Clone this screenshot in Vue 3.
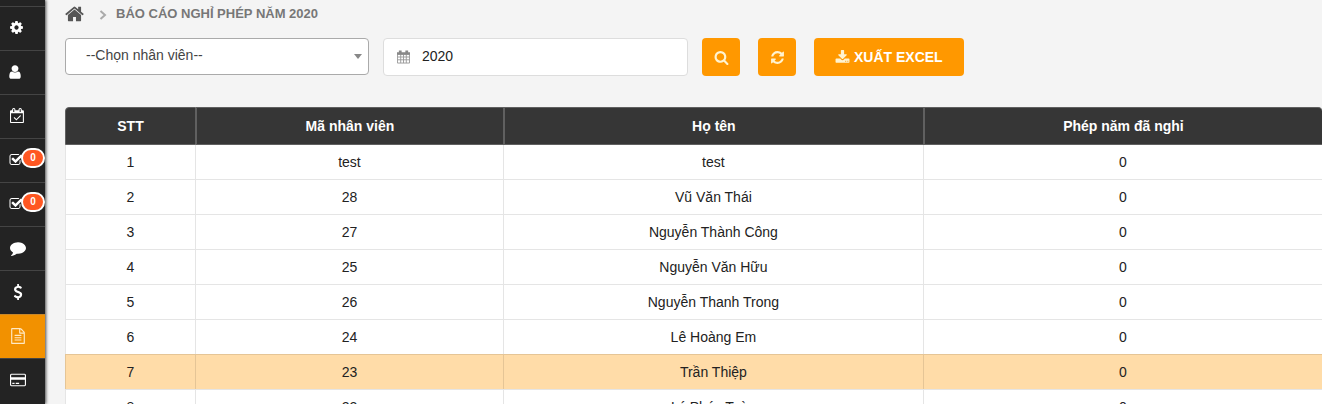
<script setup>
import { ref } from 'vue';

const employee = ref('');
const year = ref('2020');

const icons = {
    cog: 'M1152 896q0-106-75-181t-181-75-181 75-75 181 75 181 181 75 181-75 75-181zm512-109v222q0 12-8 23t-20 13l-185 28q-19 54-39 91 35 50 107 138 10 12 10 25t-9 23q-27 37-99 108t-94 71q-12 0-26-9l-138-108q-44 23-91 38-16 136-29 186-7 28-36 28h-222q-14 0-24.500-8.500t-11.500-21.500l-28-184q-49-16-90-37l-141 107q-10 9-25 9-14 0-25-11-126-114-165-168-7-10-7-23 0-12 8-23 15-21 51-66.500t54-70.500q-27-50-41-99l-183-27q-13-2-21-12.500t-8-23.500v-222q0-12 8-23t19-13l186-28q14-46 39-92-40-57-107-138-10-12-10-24 0-10 9-23 26-36 98.500-107.500t94.500-71.500q13 0 26 10l138 107q44-23 91-38 16-136 29-186 7-28 36-28h222q14 0 24.500 8.500t11.500 21.500l28 184q49 16 90 37l142-107q9-9 24-9 13 0 25 10 129 119 165 170 7 8 7 22 0 12-8 23-15 21-51 66.500t-54 70.500q26 50 41 98l183 28q13 2 21 12.500t8 23.500z',
    user: 'M1536 1399q0 109-62.500 187t-150.500 78h-854q-88 0-150.500-78t-62.500-187q0-85 8.500-160.500t31.500-152 58.500-131 94-89 134.500-34.500q131 128 313 128t313-128q76 0 134.500 34.500t94 89 58.500 131 31.500 152 8.500 160.500zm-256-887q0 159-112.500 271.500t-271.500 112.500-271.500-112.500-112.500-271.500 112.500-271.500 271.500-112.500 271.500 112.500 112.500 271.500z',
    calendar: 'M1303 964l-512 512q-10 9-23 9t-23-9l-288-288q-9-10-9-23t9-22l46-46q9-9 22-9t23 9l220 220 444-444q10-9 23-9t22 9l46 46q9 9 9 22t-9 23zm-1175 700h1408v-1024h-1408v1024zm384-1216v-288q0-14-9-23t-23-9h-64q-14 0-23 9t-9 23v288q0 14 9 23t23 9h64q14 0 23-9t9-23zm768 0v-288q0-14-9-23t-23-9h-64q-14 0-23 9t-9 23v288q0 14 9 23t23 9h64q14 0 23-9t9-23zm384-64v1280q0 52-38 90t-90 38h-1408q-52 0-90-38t-38-90v-1280q0-52 38-90t90-38h128v-96q0-66 47-113t113-47h64q66 0 113 47t47 113v96h384v-96q0-66 47-113t113-47h64q66 0 113 47t47 113v96h128q52 0 90 38t38 90z',
    check: 'M1472 930v318q0 119-84.500 203.500t-203.500 84.500h-832q-119 0-203.500-84.500t-84.500-203.500v-832q0-119 84.500-203.500t203.500-84.500h832q63 0 117 25 15 7 18 23 3 17-9 29l-49 49q-10 10-23 10-3 0-9-2-23-6-45-6h-832q-66 0-113 47t-47 113v832q0 66 47 113t113 47h832q66 0 113-47t47-113v-254q0-13 9-22l64-64q10-10 23-10 6 0 12 3 20 8 20 29zm231-489l-814 814q-24 24-57 24t-57-24l-430-430q-24-24-24-57t24-57l110-110q24-24 57-24t57 24l263 263 647-647q24-24 57-24t57 24l110 110q24 24 24 57t-24 57z',
    comment: 'M1792 896q0 174-120 321.500t-326 233-450 85.500q-70 0-145-8-198 175-460 242-49 14-114 22-17 2-30.500-9t-17.500-29v-1q-3-4-.5-12t2-10 4.500-9.500l6-9 7-8.500 8-9q7-8 31-34.500t34.500-38 31-39.500 32.500-51 27-59 26-76q-157-89-247.500-220t-90.500-281q0-130 71-248.500t191-204.500 286-136.500 348-50.500q244 0 450 85.500t326 233 120 321.500z',
    dollar: 'M1362 1185q0 153-99.500 263.500t-258.500 136.500v175q0 14-9 23t-23 9h-135q-13 0-22.500-9.500t-9.500-22.500v-175q-66-9-127.500-31t-101.500-44.500-74-48-46.500-37.500-17.500-18q-17-21-2-41l103-135q7-10 23-12 15-2 24 9l2 2q113 99 243 125 37 8 74 8 81 0 142.500-43t61.500-122q0-28-15-53t-33.500-42-58.500-37.500-66-32-80-32.500q-39-16-61.500-25t-61.500-26.500-62.500-31-56.500-35.500-53.500-42.500-43.500-49-35.500-58-21-66.500-8.500-78q0-138 98-242t255-134v-180q0-13 9.500-22.500t22.500-9.500h135q14 0 23 9t9 23v176q57 6 110.500 23t87 33.500 63.500 37.500 39 29 15 14q17 18 5 38l-81 146q-8 15-23 16-14 3-27-7-3-3-14.500-12t-39-26.500-58.500-32-74.500-26-85.500-11.500q-95 0-155 43t-60 111q0 26 8.500 48t29.500 41.500 39.500 33 56 31 60.500 27 70 27.500q53 20 81 31.500t76 35 75.500 42.500 62 50 53 63.500 31.500 76.500 13 94z',
    file: 'M1596 380q28 28 48 76t20 88v1152q0 40-28 68t-68 28h-1344q-40 0-68-28t-28-68v-1600q0-40 28-68t68-28h896q40 0 88 20t76 48zm-444-244v376h376q-10-29-22-41l-313-313q-12-12-41-22zm384 1528v-1024h-416q-40 0-68-28t-28-68v-416h-768v1536h1280zm-1024-864q0-14 9-23t23-9h704q14 0 23 9t9 23v64q0 14-9 23t-23 9h-704q-14 0-23-9t-9-23v-64zm736 224q14 0 23 9t9 23v64q0 14-9 23t-23 9h-704q-14 0-23-9t-9-23v-64q0-14 9-23t23-9h704zm0 256q14 0 23 9t9 23v64q0 14-9 23t-23 9h-704q-14 0-23-9t-9-23v-64q0-14 9-23t23-9h704z',
    card: 'M160 192h1472q66 0 113 47t47 113v1088q0 66-47 113t-113 47h-1472q-66 0-113-47t-47-113v-1088q0-66 47-113t113-47zm0 128q-32 0-32 32v224h1536v-224q0-32-32-32zm-32 544v576q0 32 32 32h1472q32 0 32-32v-576zm128 352h256v128h-256zm384 0h384v128h-384z'
};

const menu = [
    { label: 'Cài đặt', icon: 'cog' },
    { label: 'Nhân viên', icon: 'user' },
    { label: 'Lịch', icon: 'calendar' },
    { label: 'Duyệt phép', icon: 'check', count: 0 },
    { label: 'Duyệt công', icon: 'check', count: 0 },
    { label: 'Tin nhắn', icon: 'comment' },
    { label: 'Lương', icon: 'dollar' },
    { label: 'Báo cáo', icon: 'file', active: true },
    { label: 'Thẻ', icon: 'card' }
];

const rows = [
    { code: 'test', name: 'test', days: 0 },
    { code: '28', name: 'Vũ Văn Thái', days: 0 },
    { code: '27', name: 'Nguyễn Thành Công', days: 0 },
    { code: '25', name: 'Nguyễn Văn Hữu', days: 0 },
    { code: '26', name: 'Nguyễn Thanh Trong', days: 0 },
    { code: '24', name: 'Lê Hoàng Em', days: 0 },
    { code: '23', name: 'Trần Thiệp', days: 0, selected: true },
    { code: '22', name: 'Lý Phúc Toàn', days: 0 }
];
</script>

<template>
    <div class="layout">
        <nav class="sidebar">
            <a v-for="item in menu" :key="item.label" href="#" class="menu-item" :class="{ active: item.active }" :aria-label="item.label">
                <svg class="menu-icon" :class="item.icon" viewBox="0 0 1792 1792" aria-hidden="true">
                    <path fill-rule="evenodd" :d="icons[item.icon]" />
                </svg>
                <span v-if="item.count !== undefined" class="badge">{{ item.count }}</span>
            </a>
        </nav>

        <main class="content">
            <div class="breadcrumb">
                <a href="#" class="home" aria-label="Trang chủ">
                    <svg viewBox="64 200 1664 1400" aria-hidden="true">
                        <path d="M1472 992v480q0 26-19 45t-45 19h-384v-384h-256v384h-384q-26 0-45-19t-19-45v-480q0-1 .5-3t.5-3l575-474 575 474q1 2 1 6zm223-69l-62 74q-8 9-21 11h-3q-13 0-21-7l-692-577-692 577q-12 8-24 7-13-2-21-11l-62-74q-8-10-7-23.500t11-21.500l719-599q32-26 76-26t76 26l244 204v-195q0-14 9-23t23-9h192q14 0 23 9t9 23v408l219 182q10 8 11 21.500t-7 23.500z" />
                    </svg>
                </a>
                <svg class="chevron" viewBox="0 0 8 10" aria-hidden="true">
                    <path d="M1.500 1l4.500 4-4.500 4" />
                </svg>
                <h1>BÁO CÁO NGHỈ PHÉP NĂM 2020</h1>
            </div>

            <form class="toolbar" @submit.prevent>
                <div class="field select-field">
                    <select v-model="employee" aria-label="Nhân viên">
                        <option value="">--Chọn nhân viên--</option>
                        <option v-for="row in rows" :key="row.code" :value="row.code">{{ row.name }}</option>
                    </select>
                    <span class="caret"></span>
                </div>
                <label class="field year-field">
                    <svg viewBox="0 0 14 14" aria-hidden="true">
                        <path class="grid" d="M.5 4h13v9.500H.5zM.5 7h13M.5 10h13M4 4v9.500M7 4v9.500M10 4v9.500" />
                        <path class="top" d="M0 2h2V0h3v2h4V0h3v2h2v2.500H0z" />
                    </svg>
                    <input v-model="year" type="text" aria-label="Năm" />
                </label>
                <div class="actions">
                    <button type="submit" class="btn icon-btn" aria-label="Tìm kiếm">
                        <svg viewBox="0 0 1792 1792" aria-hidden="true">
                            <path d="M1216 832q0-185-131.500-316.500t-316.500-131.500-316.500 131.500-131.500 316.500 131.500 316.500 316.500 131.500 316.500-131.500 131.500-316.500zm512 832q0 52-38 90t-90 38q-54 0-90-38l-343-342q-179 124-399 124-143 0-273.500-55.500t-225-150-150-225-55.500-273.500 55.500-273.500 150-225 225-150 273.500-55.500 273.500 55.500 225 150 150 225 55.500 273.500q0 220-124 399l343 343q37 37 37 90z" />
                        </svg>
                    </button>
                    <button type="button" class="btn icon-btn" aria-label="Làm mới">
                        <svg viewBox="0 0 1792 1792" aria-hidden="true">
                            <path d="M1639 1056q0 5-1 7-64 268-268 434.500t-478 166.500q-146 0-282.500-55t-243.500-157l-129 129q-19 19-45 19t-45-19-19-45v-448q0-26 19-45t45-19h448q26 0 45 19t19 45-19 45l-137 137q71 66 161 102t187 36q134 0 250-65t186-179q11-17 53-117 8-23 30-23h192q13 0 22.500 9.500t9.500 22.500zm25-800v448q0 26-19 45t-45 19h-448q-26 0-45-19t-19-45 19-45l138-138q-148-137-349-137-134 0-250 65t-186 179q-11 17-53 117-8 23-30 23h-199q-13 0-22.500-9.500t-9.500-22.500v-7q65-268 270-434.500t480-166.500q146 0 284 55.500t245 156.500l130-129q19-19 45-19t45 19 19 45z" />
                        </svg>
                    </button>
                    <button type="button" class="btn export-btn">
                        <svg viewBox="0 0 1792 1792" aria-hidden="true">
                            <path d="M1344 1344q0-26-19-45t-45-19-45 19-19 45 19 45 45 19 45-19 19-45zm256 0q0-26-19-45t-45-19-45 19-19 45 19 45 45 19 45-19 19-45zm128-224v320q0 40-28 68t-68 28h-1472q-40 0-68-28t-28-68v-320q0-40 28-68t68-28h465l135 136q58 56 136 56t136-56l136-136h464q40 0 68 28t28 68zm-325-569q17 41-14 70l-448 448q-18 19-45 19t-45-19l-448-448q-31-29-14-70 17-39 59-39h256v-448q0-26 19-45t45-19h256q26 0 45 19t19 45v448h256q42 0 59 39z" />
                        </svg>
                        XUẤT EXCEL
                    </button>
                </div>
            </form>

            <table class="report">
                <thead>
                    <tr>
                        <th class="col-no">STT</th>
                        <th class="col-code">Mã nhân viên</th>
                        <th class="col-name">Họ tên</th>
                        <th>Phép năm đã nghỉ</th>
                    </tr>
                </thead>
                <tbody>
                    <tr v-for="(row, index) in rows" :key="row.code" :class="{ selected: row.selected }">
                        <td>{{ index + 1 }}</td>
                        <td>{{ row.code }}</td>
                        <td>{{ row.name }}</td>
                        <td>{{ row.days }}</td>
                    </tr>
                </tbody>
            </table>
        </main>
    </div>
</template>

<style>
body {
    margin: 0;
    background-color: #f4f4f4;
}
</style>

<style scoped>
.layout {
    display: flex;
    height: 100vh;
    overflow: hidden;
    font-family: "Liberation Sans", Arial, sans-serif;
    font-size: 14px;
    color: #222;
}

.layout * {
    box-sizing: border-box;
}

.sidebar {
    flex: none;
    width: 45px;
    padding-top: 6px;
    background-color: #232323;
    box-shadow: 1px 0 3px rgba(0, 0, 0, 0.7);
}

.menu-item {
    position: relative;
    display: flex;
    align-items: center;
    height: 44px;
    padding: 0 0 2px 10px;
    border-top: 1px solid #444;
}

.menu-item.active {
    background-color: #f29100;
    border-top-color: #c9882a;
}

.menu-icon {
    width: 16px;
    height: 16px;
    fill: #fff;
}

.active .menu-icon {
    fill: #ffe9c4;
}

.menu-icon.cog {
    width: 15px;
    height: 15px;
    margin-left: -1px;
}

.menu-icon.user {
    margin-left: -3px;
}

.menu-icon.calendar {
    width: 15px;
    height: 15px;
}

.menu-icon.check {
    width: 14px;
    height: 14px;
    margin-left: -1px;
}

/* Counter that sits over the menu icon */
.badge {
    position: absolute;
    top: 9px;
    left: 21px;
    width: 24px;
    height: 20px;
    border: 2px solid #fff;
    border-radius: 10px;
    background-color: #ff5722;
    color: #fff;
    font-size: 10px;
    font-weight: bold;
    line-height: 16px;
    text-align: center;
}

.content {
    flex: 1;
    min-width: 0;
    padding: 4px 0 0 20px;
}

.breadcrumb {
    display: flex;
    align-items: center;
    height: 20px;
}

.home {
    display: flex;
}

.home svg {
    width: 19px;
    height: 16px;
    fill: #555;
}

.chevron {
    width: 8px;
    height: 10px;
    margin: 2px 9px 0 15px;
    fill: none;
    stroke: #aaa;
    stroke-width: 2;
}

h1 {
    margin: 0;
    font-size: 13px;
    line-height: 20px;
    color: #777;
}

.toolbar {
    display: flex;
    align-items: flex-start;
    gap: 14px;
    margin: 14px 0 31px;
    height: 38px;
}

.field {
    position: relative;
    flex: 0 1 305px;
    display: flex;
    align-items: center;
    border: 1px solid #ddd;
    border-radius: 4px;
    background-color: #fff;
}

.select-field {
    flex-basis: 304px;
    height: 37px;
    border-color: #aaa;
}

.select-field select {
    appearance: none;
    width: 100%;
    height: 35px;
    padding: 0 20px 3px;
    border: 0;
    background: none;
    color: #444;
    font: inherit;
}

.caret {
    position: absolute;
    top: 15px;
    right: 6px;
    border: 4px solid transparent;
    border-top: 5px solid #888;
    border-bottom: 0;
    pointer-events: none;
}

.year-field {
    height: 38px;
    padding-left: 13px;
}

.year-field svg {
    flex: none;
    width: 13px;
    height: 14px;
}

.year-field .grid {
    fill: #fff;
    stroke: #999;
}

.year-field .top {
    fill: #888;
}

.year-field input {
    flex: 1;
    min-width: 0;
    height: 36px;
    padding: 0 12px 2px;
    border: 0;
    background: none;
    color: #222;
    font: inherit;
}

.actions {
    display: flex;
    gap: 18px;
}

.btn {
    display: flex;
    align-items: center;
    justify-content: center;
    gap: 4px;
    height: 38px;
    border: 0;
    border-radius: 4px;
    background-color: #ff9800;
    color: #fff;
    font: bold 14px "Liberation Sans", Arial, sans-serif;
    white-space: nowrap;
    cursor: pointer;
}

.btn svg {
    width: 15px;
    height: 15px;
    fill: #fff3d0;
}

.icon-btn {
    width: 38px;
    padding: 0;
}

.export-btn {
    padding: 0 21px;
}

.report {
    width: 100%;
    table-layout: fixed;
    border-collapse: separate;
    border-spacing: 0;
    text-align: center;
}

.report th {
    height: 38px;
    padding: 0;
    border: 1px solid #606060;
    background-color: #363636;
    color: #fff;
}

.report th:first-child {
    border-top-left-radius: 4px;
}

.report th:last-child {
    border-right: 0;
    border-top-right-radius: 4px;
}

.col-no {
    width: 10.42%;
}

.col-code {
    width: 24.5%;
}

.col-name {
    width: 33.41%;
}

.report td {
    height: 35px;
    padding: 0;
    border-top: 1px solid rgba(0, 0, 0, 0.1);
    border-right: 1px solid rgba(0, 0, 0, 0.1);
    background-color: #fff;
}

.report td:first-child {
    border-left: 1px solid rgba(0, 0, 0, 0.1);
}

.report td:last-child {
    border-right: 0;
}

.report tbody tr:first-child td {
    height: 34px;
    border-top: 0;
}

.report .selected td {
    background-color: #ffdca8;
}
</style>
